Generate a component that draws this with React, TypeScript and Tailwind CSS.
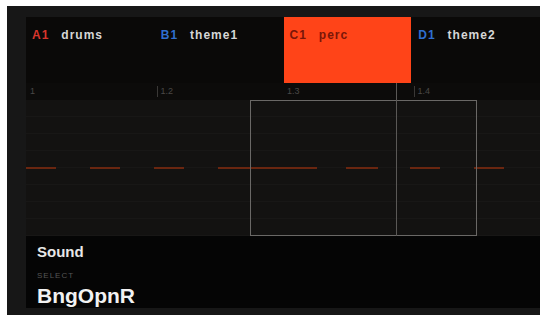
import React from "react";

const tabs = [
  { id: "A1", name: "drums", idColor: "text-[#d8352c]", active: false },
  { id: "B1", name: "theme1", idColor: "text-[#2f6fcf]", active: false },
  { id: "C1", name: "perc", idColor: "text-[#7a1608]", active: true },
  { id: "D1", name: "theme2", idColor: "text-[#2f6fcf]", active: false },
];

// dash width per 1/16 step (px), 8 steps of 64px
const steps = [30, 30, 30, 64, 35, 32, 30, 30];

const rulers = [
  { label: "1", bar: false },
  { label: "1.2", bar: true },
  { label: "1.3", bar: false },
  { label: "1.4", bar: true },
];

const App = () => {
  return (
    <div
      className="w-[540px] h-[315px] bg-white pt-[6px] pl-[7px] overflow-hidden"
      style={{ fontFamily: '"Liberation Sans", Arial, sans-serif' }}
    >
      <div className="h-[309px] bg-[#171717] pt-[11px] pl-[19px] flex flex-col">
        <div className="w-[514px] h-[291px] bg-[#0a0908] flex flex-col">
          {/* TABS */}
          <div className="h-[66px] grid grid-cols-4 gap-[1px]">
            {tabs.map((t) => (
              <div
                key={t.id}
                className={`${
                  t.active ? "bg-[#ff4418] text-[#7a1608]" : "text-[#d6d6d6]"
                } flex items-start pt-[9px] pl-[6px] text-[12px] font-bold tracking-[1px]`}
              >
                <span className={t.idColor}>{t.id}</span>
                <span className="ml-[12px]">{t.name}</span>
              </div>
            ))}
          </div>

          {/* RULER */}
          <div className="h-[17px] grid grid-cols-4 bg-[#0c0b0a] relative">
            {rulers.map((r, i) => (
              <div key={i} className="flex items-center pl-[4px] text-[9px] text-[#4a4846]">
                {r.bar && <span className="w-[1px] h-[11px] bg-[#3a3836] mr-[3px] -ml-[2px]" />}
                <span>{r.label}</span>
              </div>
            ))}
            {/* playhead */}
            <div className="absolute left-[370px] top-0 w-[1px] h-[153px] bg-[#5a5856] z-10" />
          </div>

          {/* PATTERN */}
          <div className="h-[136px] relative bg-[#131211] bg-[repeating-linear-gradient(180deg,transparent_0px,transparent_16px,#181716_16px,#181716_17px)]">
            <div className="grid grid-cols-8 w-[512px] pt-[67px]">
              {steps.map((w, i) => (
                <div key={i} className="h-[3px] flex">
                  <div className="h-[2px] bg-[#6a2610]" style={{ width: w }} />
                </div>
              ))}
            </div>
            {/* selection */}
            <div className="absolute left-[224px] top-0 w-[227px] h-[136px] border-[1.5px] border-[#6a6866]" />
          </div>

          {/* INFO */}
          <div className="h-[72px] bg-[#050505] flex flex-col pl-[11px] pt-[7px]">
            <span className="text-[15px] font-bold text-[#e8e8e8] leading-[18px]">Sound</span>
            <span className="text-[8px] text-[#555] tracking-[1px] mt-[10px] leading-[10px]">SELECT</span>
            <span className="text-[21px] font-bold text-[#f2f2f2] leading-[24px] mt-[3px]">BngOpnR</span>
          </div>
        </div>
      </div>
    </div>
  );
};

export default App;
